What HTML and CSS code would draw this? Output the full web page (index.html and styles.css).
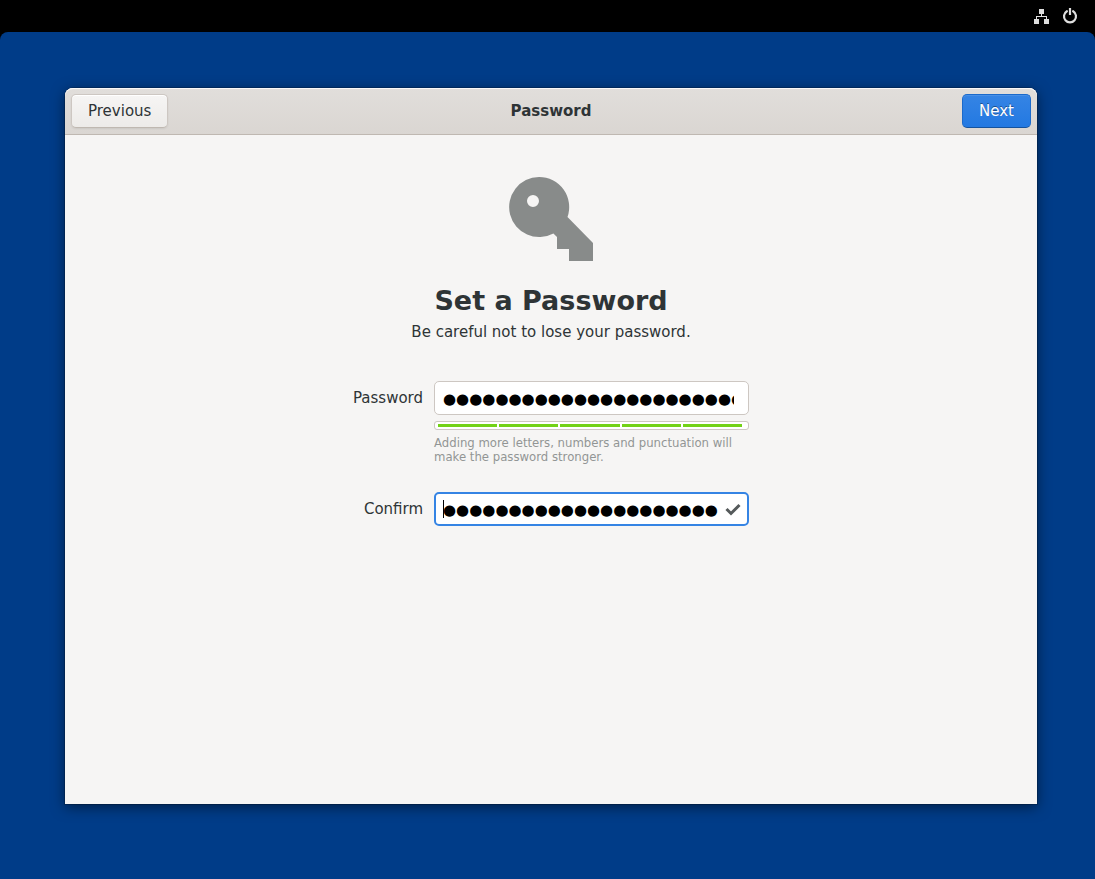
FILE: index.html
```html
<!DOCTYPE html>
<html lang="en">
<head>
<meta charset="utf-8">
<title>Password</title>
<link rel="stylesheet" href="styles.css">
</head>
<body>
<div class="topbar">
  <button class="tray-button" type="button" aria-label="Wired network">
    <svg width="16" height="16" viewBox="0 0 16 16" fill="#dedede"><path d="M5 1h5v5H5zM0 11h5v5H0zM10 11h5v5h-5z"/><path d="M7 6h1v2h5v3h-1V9H3v2H2V8h5z"/></svg>
  </button>
  <button class="tray-button" type="button" aria-label="Power">
    <svg width="16" height="16" viewBox="0 0 16 16" fill="none" stroke="#dedede" stroke-width="2.200"><path d="M4.900 3.200a6 6 0 1 0 6.200 0" stroke-linecap="round"/><path d="M8 0v7"/></svg>
  </button>
</div>
<div class="desktop">
  <form class="window">
    <header class="headerbar">
      <button class="button" type="button">Previous</button>
      <div class="headerbar-title">Password</div>
      <button class="button button-suggested" type="submit">Next</button>
    </header>
    <main class="page">
      <svg class="key" width="96" height="96" viewBox="0 0 16 16" fill="#888b8a" aria-hidden="true"><path fill-rule="evenodd" d="M6 1a5 5 0 1 0 2.400 9.400L9 11v2h2v2h4v-3L10.750 7.650A5 5 0 0 0 6 1zM5 4a1 1 0 1 1 0 2 1 1 0 0 1 0-2z"/></svg>
      <h1 class="title">Set a Password</h1>
      <p class="subtitle">Be careful not to lose your password.</p>
      <div class="fields">
        <label class="label" for="password">Password</label>
        <input class="entry" id="password" type="text" autocomplete="off" spellcheck="false" value="●●●●●●●●●●●●●●●●●●●●●●●●●●" aria-describedby="hint">
        <div class="strength" role="meter" aria-label="Password strength" aria-valuemin="0" aria-valuemax="5" aria-valuenow="5">
          <span class="block"></span><span class="block"></span><span class="block"></span><span class="block"></span><span class="block"></span>
        </div>
        <p class="hint" id="hint">Adding more letters, numbers and punctuation will make the password stronger.</p>
        <label class="label" for="confirm">Confirm</label>
        <div class="confirm">
          <input class="entry entry-focused" id="confirm" type="text" autocomplete="off" spellcheck="false" value="●●●●●●●●●●●●●●●●●●●●●●●●●●">
          <span class="caret"></span>
          <svg class="check" width="16" height="16" viewBox="0 0 16 16" fill="none" stroke="#555a5b" stroke-width="3" aria-hidden="true"><path d="M1.500 8l4.500 4.500L14.500 4"/></svg>
        </div>
      </div>
    </main>
  </form>
</div>
</body>
</html>
```
FILE: styles.css
```css
* {
  box-sizing: border-box;
}

body {
  margin: 0;
  min-height: 100vh;
  display: flex;
  flex-direction: column;
  background: #000;
  color: #2e3436;
  font: 15px/18px "DejaVu Sans", sans-serif;
}

.topbar {
  display: flex;
  justify-content: flex-end;
  align-items: center;
  gap: 12px;
  height: 32px;
  padding: 0 17px;
}

.tray-button {
  display: flex;
  padding: 0;
  border: 0;
  background: none;
}

.desktop {
  flex: 1;
  display: flex;
  padding: 56px 58px 75px 65px;
  border-radius: 8px 8px 0 0;
  background: #003c88;
}

.window {
  flex: 1;
  display: flex;
  flex-direction: column;
  border-radius: 8px 8px 0 0;
  background: #f6f5f4;
  box-shadow: 0 3px 14px rgba(0, 0, 0, 0.5), 0 0 0 1px rgba(0, 0, 0, 0.2);
}

.headerbar {
  display: grid;
  grid-template-columns: 1fr auto 1fr;
  align-items: center;
  height: 47px;
  padding: 0 6px;
  border-bottom: 1px solid #bfb8b1;
  border-radius: 8px 8px 0 0;
  background: linear-gradient(to top, #dad6d2, #e1dedb);
  box-shadow: inset 0 1px #f9f8f8;
}

.headerbar-title {
  font-weight: bold;
}

.button {
  justify-self: start;
  height: 34px;
  padding: 0 16px;
  border: 1px solid #cdc7c2;
  border-bottom-color: #bfb8b1;
  border-radius: 5px;
  background: linear-gradient(to top, #edebe9, #f6f5f4);
  box-shadow: inset 0 1px #fff, 0 1px 2px rgba(0, 0, 0, 0.07);
  color: #2e3436;
  font: inherit;
}

.button-suggested {
  justify-self: end;
  border-color: #1b6acb;
  border-bottom-color: #15539e;
  background: linear-gradient(to top, #2379e2, #3584e4);
  box-shadow: inset 0 1px rgba(255, 255, 255, 0.1);
  color: #fff;
  text-shadow: 0 -1px rgba(0, 0, 0, 0.4);
}

.page {
  flex: 1;
  display: flex;
  flex-direction: column;
  align-items: center;
  padding-top: 36px;
}

.title {
  margin: 18px 0 6px;
  font-size: 27px;
  line-height: 32px;
}

.subtitle {
  margin: 0;
}

.fields {
  display: grid;
  grid-template-columns: auto 315px;
  column-gap: 11px;
  align-items: center;
  margin-top: 40px;
}

.label {
  text-align: right;
}

.entry {
  width: 100%;
  height: 34px;
  padding: 2px 14px 0 8px;
  border: 1px solid #cdc7c2;
  border-radius: 5px;
  outline: 0;
  background: #fff;
  color: #000;
  font: 15px/20px "DejaVu Sans", sans-serif;
}

.strength {
  grid-column: 2;
  display: flex;
  gap: 2px;
  height: 9px;
  margin-top: 6px;
  padding: 2px 6px 2px 3px;
  border: 1px solid #cdc7c2;
  border-radius: 3px;
  background: #fff;
}

.block {
  flex: 1;
  height: 3px;
  background: #73d216;
}

.hint {
  grid-column: 2;
  margin: 6px 0 28px;
  color: #929595;
  font-family: "DejaVu Sans Condensed", "DejaVu Sans", sans-serif;
  font-size: 13px;
  line-height: 14px;
}

.confirm {
  position: relative;
}

.entry-focused {
  padding: 1px 29px 0 7px;
  border: 2px solid #3584e4;
  caret-color: transparent;
}

.caret {
  position: absolute;
  top: 8px;
  left: 9px;
  width: 1px;
  height: 18px;
  background: #000;
}

.check {
  position: absolute;
  top: 9px;
  right: 8px;
}
```
